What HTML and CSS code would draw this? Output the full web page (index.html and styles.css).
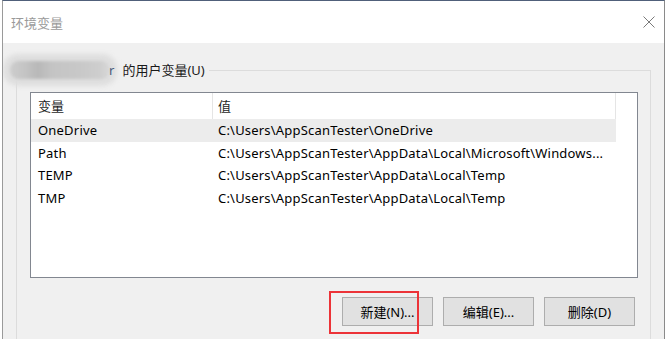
FILE: index.html
```html
<!DOCTYPE html>
<html lang="zh-CN">
<head>
    <meta charset="UTF-8">
    <title>环境变量</title>
    <link rel="stylesheet" href="styles.css">
</head>
<body>
    <div class="window">
        <div class="titlebar">
            <span class="title">环境变量</span>
            <svg class="close" width="12" height="12" viewBox="0 0 12 12">
                <path d="M0.5 0.5 L11.5 11.5 M11.5 0.5 L0.5 11.5" stroke="#7a7a7a" stroke-width="1" fill="none"/>
            </svg>
        </div>

        <div class="content">
            <fieldset class="group">
                <legend><span class="blur"></span><span class="user-tail">r</span><span class="legend-text">的用户变量(U)</span></legend>

                <div class="listview">
                    <div class="list-header">
                        <div class="col col-name">变量</div>
                        <div class="col col-value">值</div>
                    </div>
                    <div class="list-row selected">
                        <div class="col col-name">OneDrive</div>
                        <div class="col col-value">C:\Users\AppScanTester\OneDrive</div>
                    </div>
                    <div class="list-row">
                        <div class="col col-name">Path</div>
                        <div class="col col-value">C:\Users\AppScanTester\AppData\Local\Microsoft\Windows...</div>
                    </div>
                    <div class="list-row">
                        <div class="col col-name">TEMP</div>
                        <div class="col col-value">C:\Users\AppScanTester\AppData\Local\Temp</div>
                    </div>
                    <div class="list-row">
                        <div class="col col-name">TMP</div>
                        <div class="col col-value">C:\Users\AppScanTester\AppData\Local\Temp</div>
                    </div>
                </div>

                <div class="buttons">
                    <div class="btn-wrap">
                        <button class="btn">新建(N)...</button>
                        <div class="highlight"></div>
                    </div>
                    <button class="btn">编辑(E)...</button>
                    <button class="btn">删除(D)</button>
                </div>
            </fieldset>
        </div>
    </div>
</body>
</html>
```

FILE: styles.css
```css
* {
    box-sizing: border-box;
}

body {
    margin: 0;
    width: 665px;
    height: 339px;
    overflow: hidden;
    background-color: #ffffff;
    font-family: "Noto Sans", "Noto Sans CJK SC", sans-serif;
    font-size: 13px;
    color: #000;
}

.window {
    margin-left: 2px;
    width: 663px;
    height: 339px;
    border-left: 1px solid #9a9a9a;
    border-right: 1px solid #8a8a8a;
    border-top: 1px solid #50607a;
    background-color: #f0f0f0;
    overflow: hidden;
}

.titlebar {
    height: 42px;
    background-color: #ffffff;
    display: flex;
    align-items: center;
    justify-content: space-between;
    padding: 0 9px 0 8px;
}

.title {
    color: #9a9a9a;
    font-size: 13px;
}

.close {
    display: block;
}

.content {
    padding: 0 13px;
}

.group {
    margin: 17px 0 0 0;
    padding: 12px 12px 0 13px;
    border: 1px solid #dcdcdc;
    border-bottom: none;
    height: 300px;
    min-width: 0;
}

.group legend {
    padding: 0 4px 0 0;
    height: 20px;
    line-height: 20px;
    color: #1a1a1a;
}

/* 打码的用户名 */
.blur {
    display: inline-block;
    width: 100px;
    height: 18px;
    margin: 1px -1px 1px -20px;
    vertical-align: top;
    border-radius: 8px;
    background: linear-gradient(90deg, #cdcdcd 0%, #c4c4c4 15%, #b8b8b8 28%, #c4c4c4 42%, #c8c8c8 70%, #cecece 90%, #d8d8d8 100%);
    box-shadow: 0 0 4px 7px #dedede;
    filter: blur(1.5px);
}

.user-tail {
    position: relative;
    color: #4a5a7a;
}

.legend-text {
    padding-left: 8px;
}

.listview {
    height: 186px;
    background-color: #ffffff;
    border: 1px solid #828790;
}

.list-header,
.list-row {
    display: flex;
    width: 585px;
}

.list-header {
    height: 26px;
    align-items: center;
}

.list-header .col {
    height: 26px;
    line-height: 26px;
    border-right: 1px solid #e5e5e5;
    color: #1e1e1e;
}

.list-row {
    height: 22.5px;
    line-height: 22.5px;
    letter-spacing: 0.2px;
}

.list-row.selected {
    background-color: #ececec;
}

.col {
    white-space: nowrap;
    overflow: hidden;
}

.col-name {
    width: 182px;
    padding-left: 7px;
}

.col-value {
    flex: 1;
    padding-left: 5px;
}

.buttons {
    display: flex;
    justify-content: flex-end;
    gap: 10px;
    margin-top: 19px;
    padding-right: 3px;
}

.btn-wrap {
    position: relative;
}

.btn {
    display: block;
    width: 91px;
    height: 29px;
    background-color: #e1e1e1;
    border: 1px solid #adadad;
    font-family: "Noto Sans", "Noto Sans CJK SC", sans-serif;
    font-size: 13px;
    color: #000;
    padding: 0;
}

.highlight {
    position: absolute;
    left: -13px;
    top: -6px;
    width: 90px;
    height: 43px;
    border: 2px solid #ec3338;
}
```
